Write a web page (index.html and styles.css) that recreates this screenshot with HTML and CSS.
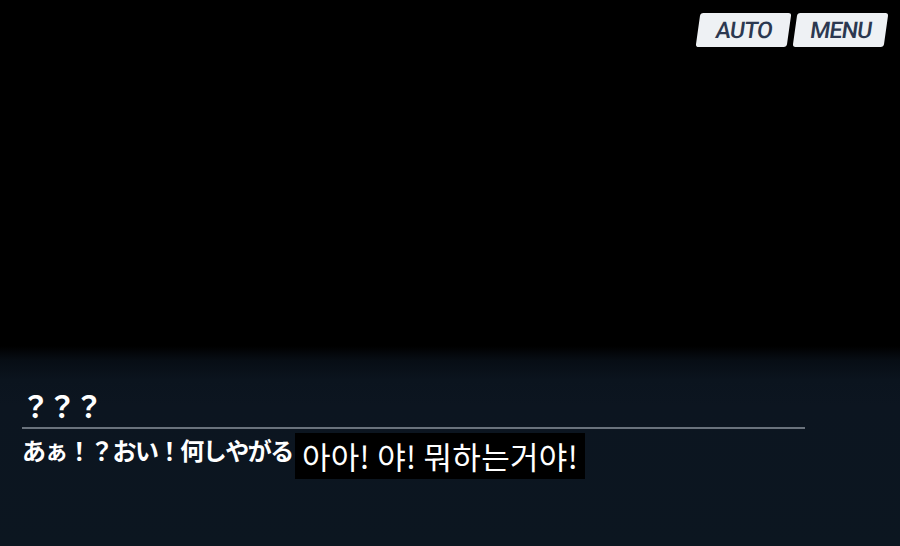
FILE: index.html
```html
<!DOCTYPE html>
<html lang="ja">
<head>
<meta charset="utf-8">
<title>ADV</title>
<link rel="stylesheet" href="styles.css">
</head>
<body>
<div class="screen">
  <div class="topbar">
    <button class="btn">AUTO</button>
    <button class="btn">MENU</button>
  </div>
  <div class="spacer"></div>
  <div class="dialog">
    <div class="name">？？？</div>
    <div class="rule"></div>
    <div class="line">
      <span class="jp">あぁ！？おい！何しやがる</span>
      <span class="sub">아아! 야! 뭐하는거야!</span>
    </div>
  </div>
</div>
</body>
</html>
```
FILE: styles.css
```css
html, body {
  margin: 0;
  padding: 0;
  background: #000;
}
.screen {
  width: 900px;
  height: 546px;
  display: flex;
  flex-direction: column;
  background: #000;
  overflow: hidden;
}
.topbar {
  display: flex;
  justify-content: flex-end;
  gap: 6px;
  padding: 13px 14px 0 0;
}
.btn {
  width: 91px;
  height: 34px;
  border: none;
  border-radius: 3px;
  background: #eef1f4;
  color: #2b3850;
  font-family: Roboto, "Liberation Sans", sans-serif;
  font-weight: 500;
  font-size: 23px;
  letter-spacing: -0.8px;
  padding: 2px 0 0 1px;
  line-height: 32px;
  transform: skewX(-8deg);
}
.spacer {
  flex: 1;
}
.dialog {
  height: 200px;
  background: linear-gradient(to bottom, #000 0px, #070d14 14px, #0b141e 34px, #0c1520 60px, #0c1620 100%);
  display: flex;
  flex-direction: column;
  padding: 0 0 0 22px;
  font-family: "Noto Sans CJK JP", "Noto Sans CJK KR", sans-serif;
  color: #fff;
}
.name {
  margin-top: 41px;
  font-size: 29px;
  font-weight: bold;
  line-height: 36px;
  height: 36px;
  letter-spacing: -2.4px;
  margin-left: -1px;
}
.rule {
  width: 783px;
  height: 2px;
  background: #6a727c;
  margin-top: 4px;
}
.line {
  display: flex;
  align-items: flex-start;
  margin-top: 4px;
}
.jp {
  font-size: 24px;
  font-weight: bold;
  letter-spacing: -1.4px;
  line-height: 30px;
  margin-top: 2px;
}
.sub {
  font-family: "Noto Sans CJK KR", sans-serif;
  font-size: 31px;
  line-height: 46px;
  background: #000;
  padding: 0 7px 0 7px;
  margin-left: 2px;
  letter-spacing: 0.3px;
}
```
